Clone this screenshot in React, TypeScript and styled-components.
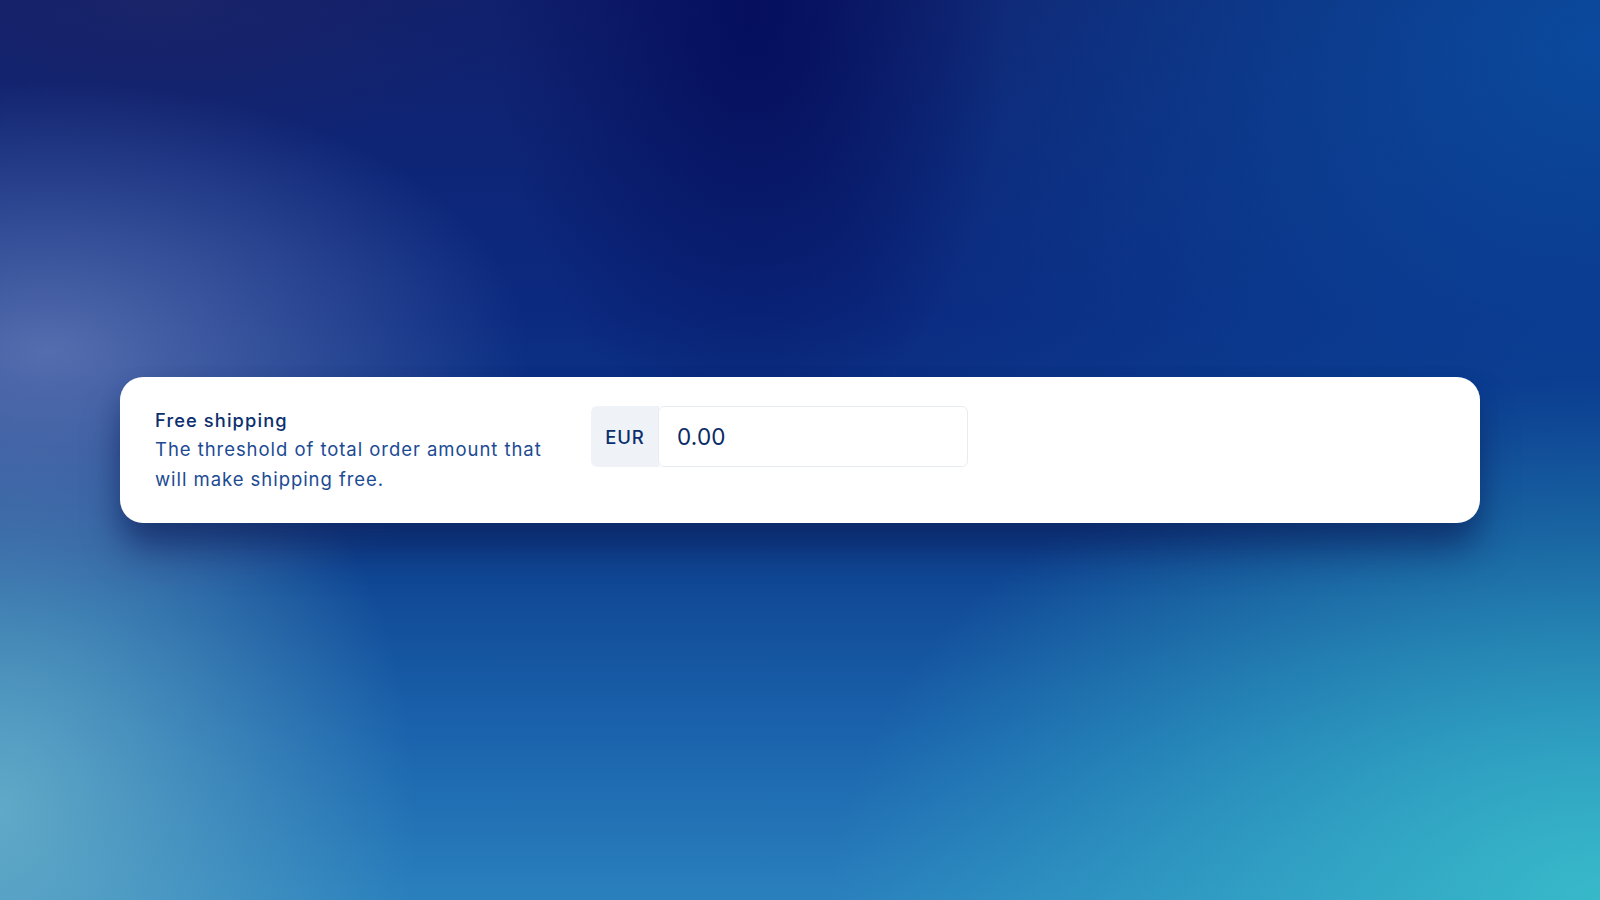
import React from "react";
import styled, { createGlobalStyle } from "styled-components";

const GlobalStyle = createGlobalStyle`
  html, body {
    margin: 0;
    padding: 0;
    height: 100%;
  }
  body {
    font-family: Inter, "Noto Sans", "Liberation Sans", sans-serif;
  }
  #root {
    height: 100%;
  }
`;

const Backdrop = styled.main`
  box-sizing: border-box;
  width: 100%;
  height: 100vh;
  padding: 0 120px;
  display: flex;
  align-items: center;
  overflow: hidden;
  background:
    radial-gradient(ellipse 30% 30% at 3% 39%, rgba(88, 112, 176, 0.95), rgba(88, 112, 176, 0) 100%),
    radial-gradient(ellipse 26% 55% at 0% 90%, rgba(100, 172, 200, 0.95), rgba(100, 172, 200, 0) 100%),
    radial-gradient(ellipse 48% 58% at 100% 100%, rgba(56, 188, 202, 0.95), rgba(56, 188, 202, 0) 100%),
    radial-gradient(ellipse 16% 48% at 47% 2%, rgba(4, 14, 92, 0.95), rgba(4, 14, 92, 0) 100%),
    radial-gradient(ellipse 50% 70% at 100% 5%, rgba(10, 76, 160, 0.95), rgba(10, 76, 160, 0) 100%),
    radial-gradient(ellipse 22% 18% at 10% 0%, rgba(26, 36, 104, 0.9), rgba(26, 36, 104, 0) 100%),
    linear-gradient(180deg, #11206c 0%, #0b2a80 35%, #0e418f 60%, #1b64ad 82%, #2a80bd 100%);
`;

const Card = styled.section`
  flex: 1;
  display: flex;
  align-items: flex-start;
  gap: 30px;
  padding: 29px 35px;
  background: #ffffff;
  border-radius: 23px;
  box-shadow:
    0 30px 38px -4px rgba(12, 30, 88, 0.6),
    0 8px 20px rgba(10, 30, 80, 0.2);
`;

const Info = styled.div`
  width: 406px;
  display: flex;
  flex-direction: column;
`;

const Title = styled.h3`
  margin: 0;
  font-size: 18.3px;
  line-height: 29px;
  font-weight: 500;
  letter-spacing: 1.1px;
  color: #0b2f6e;
`;

const Description = styled.p`
  margin: 0;
  font-size: 18.5px;
  line-height: 29.5px;
  font-weight: 400;
  letter-spacing: 0.95px;
  color: #1c4b93;
`;

const InputGroup = styled.div`
  display: flex;
  height: 61px;
  width: 377px;
`;

const Addon = styled.span`
  display: flex;
  align-items: center;
  justify-content: center;
  width: 68px;
  background: #eff3f8;
  border-radius: 6px 0 0 6px;
  font-size: 18.5px;
  font-weight: 500;
  letter-spacing: 0.9px;
  color: #0b2f6e;
`;

const AmountInput = styled.input`
  flex: 1;
  min-width: 0;
  box-sizing: border-box;
  margin-left: -1px;
  padding: 0 18px;
  border: 1.5px solid #e7ecf3;
  border-radius: 6px;
  background: #ffffff;
  font-family: Inter, "Noto Sans", "Liberation Sans", sans-serif;
  font-size: 22.5px;
  letter-spacing: 0.2px;
  color: #0a2a66;
  outline: none;
`;

const App: React.FC = () => {
  return (
    <>
      <GlobalStyle />
      <Backdrop>
        <Card>
          <Info>
            <Title>Free shipping</Title>
            <Description>
              The threshold of total order amount that will make shipping free.
            </Description>
          </Info>
          <InputGroup>
            <Addon>EUR</Addon>
            <AmountInput defaultValue="0.00" />
          </InputGroup>
        </Card>
      </Backdrop>
    </>
  );
};

export default App;
